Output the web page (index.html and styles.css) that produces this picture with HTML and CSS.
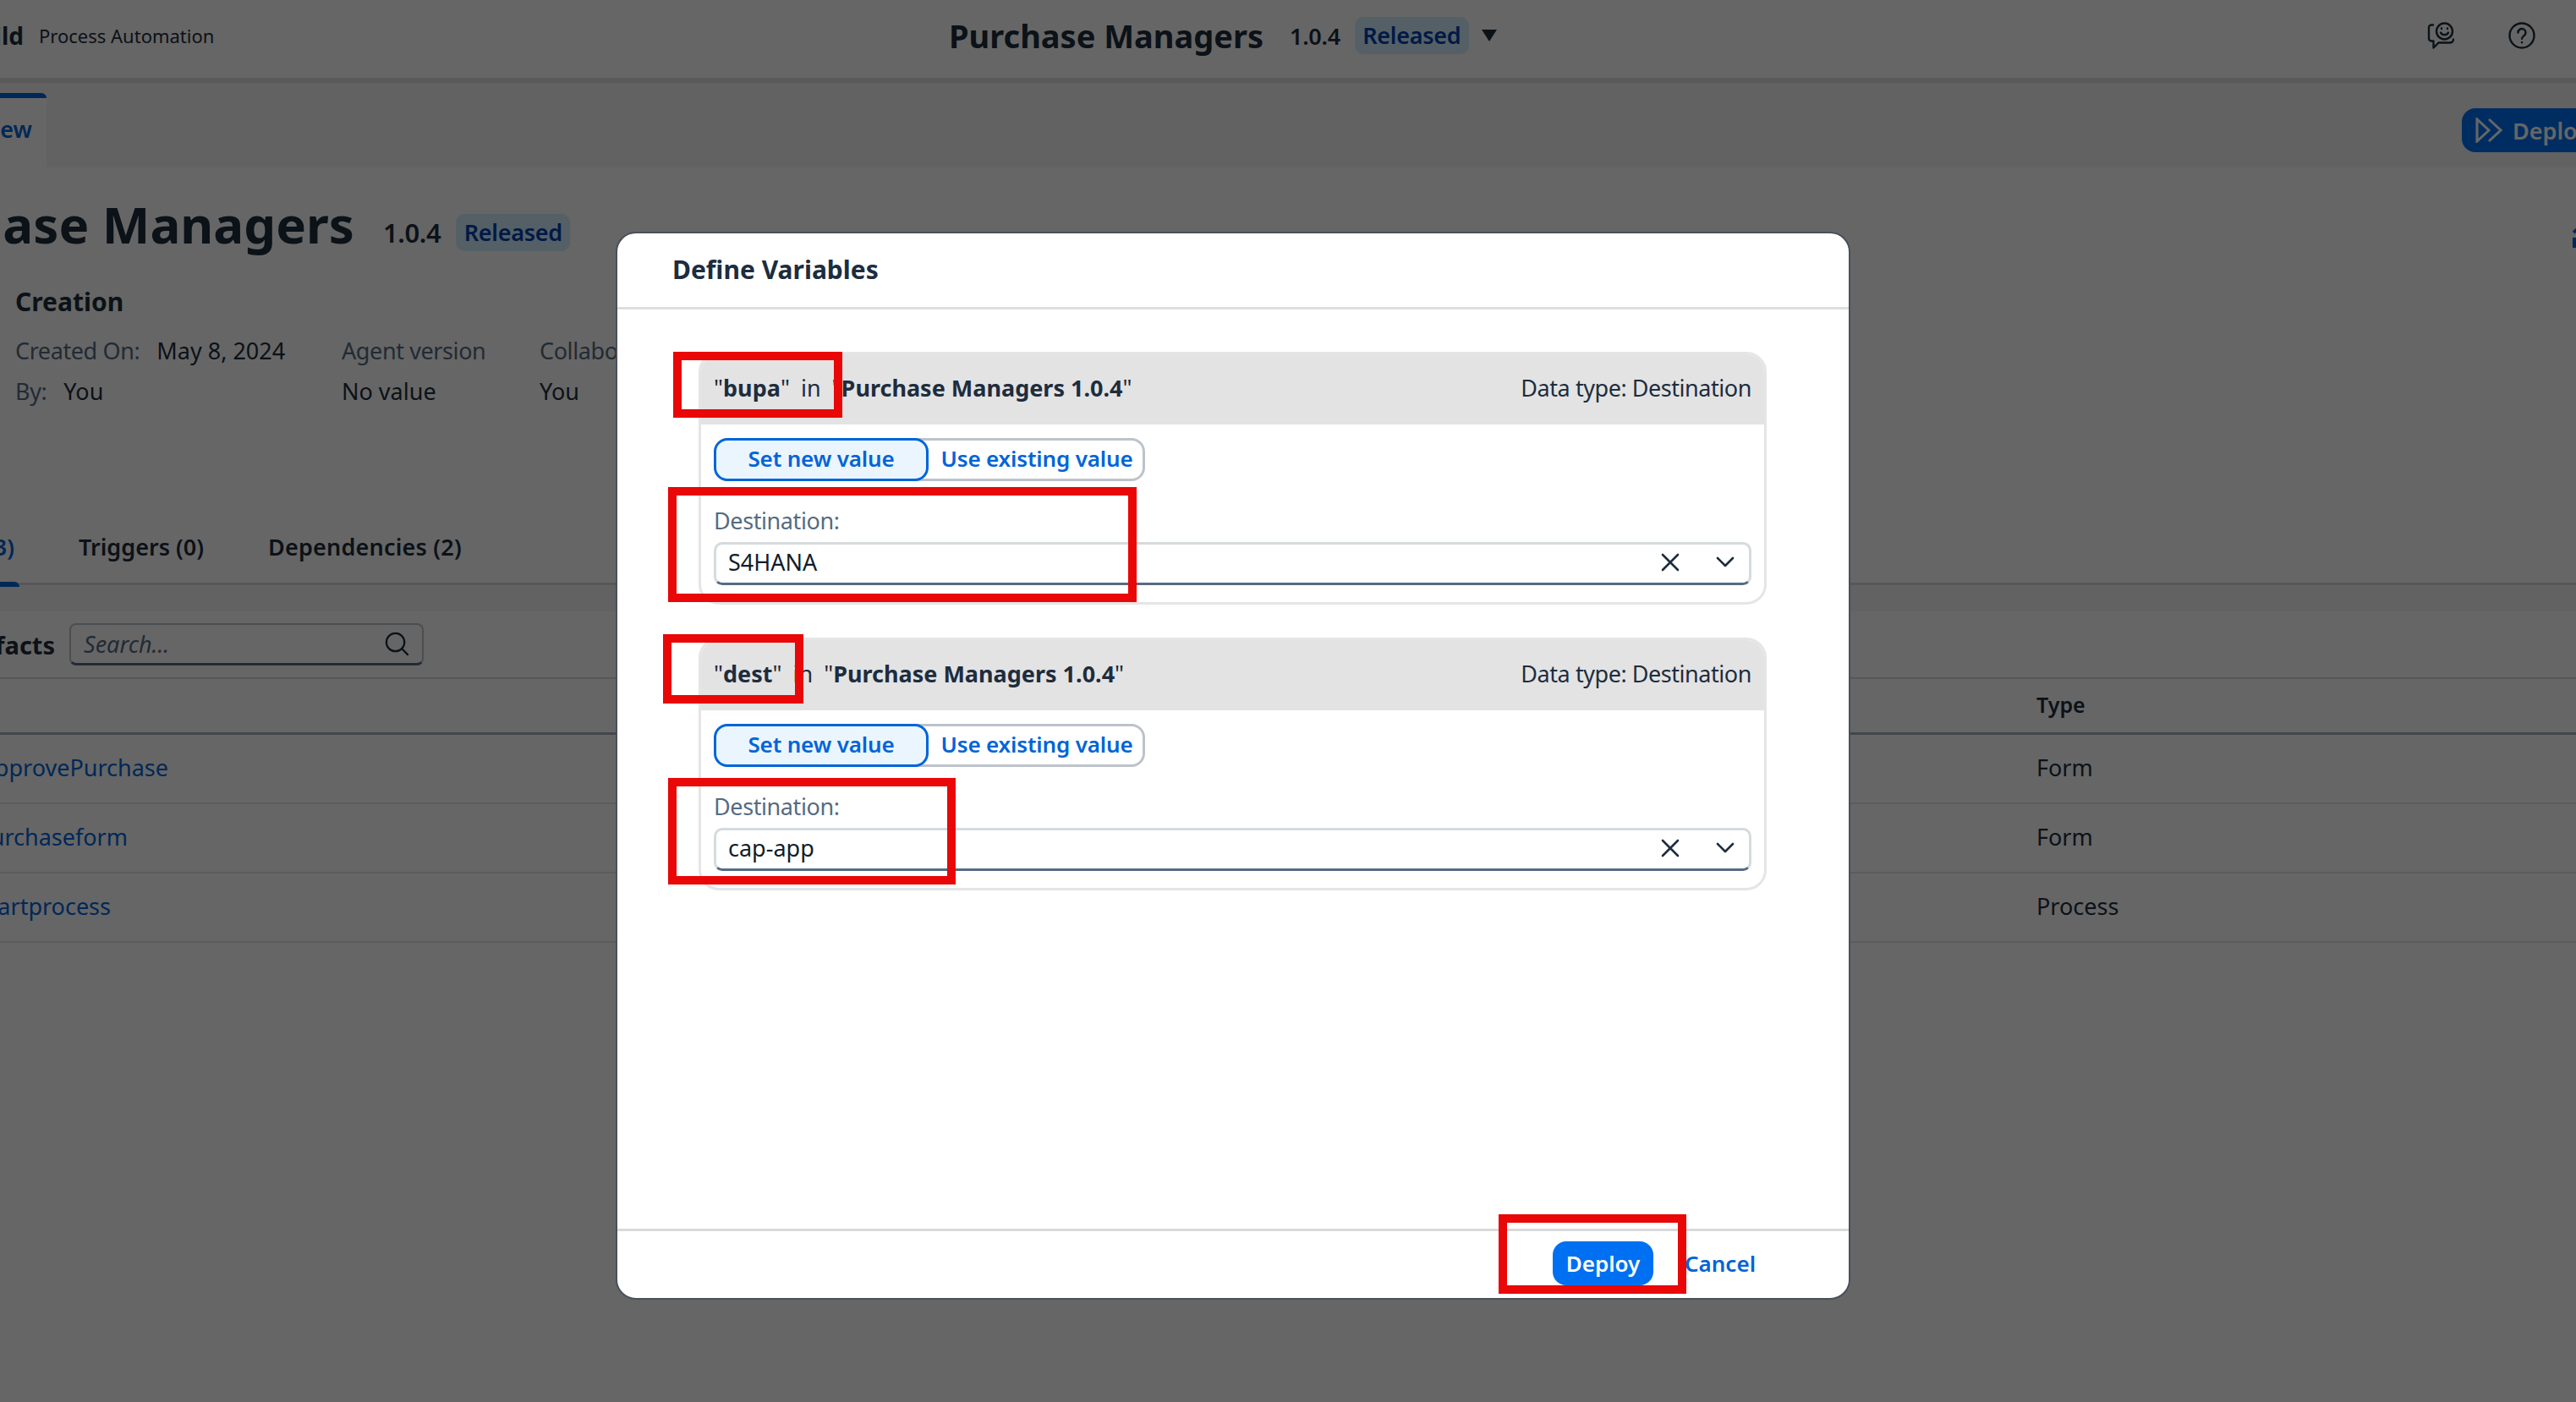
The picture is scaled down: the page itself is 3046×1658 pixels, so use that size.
FILE: index.html
```html
<!DOCTYPE html>
<html>
    <head>
        <meta charset="utf-8">
        <title>Purchase Managers</title>
        <link rel="stylesheet" href="styles.css">
    </head>
    <body>
        <header class="topbar">
            <div class="brand">
                <strong class="clip-left brand-name">SAP Build</strong>
                <span>Process Automation</span>
            </div>
            <div class="topbar-title">
                <strong class="project-name">Purchase Managers</strong>
                <span class="version">1.0.4</span>
                <span class="badge">Released</span>
                <span class="caret"></span>
            </div>
            <div class="topbar-icons">
                <svg class="icon" viewBox="0 0 32 32" fill="none" stroke="currentColor" stroke-width="2.4" stroke-linecap="round" stroke-linejoin="round">
                    <path d="M7 3.500H5a3 3 0 0 0-3 3v13a3 3 0 0 0 3 3h2.500v8l6-6h13.500a4 4 0 0 0 4-4"/>
                    <circle cx="20.500" cy="11" r="9.500"/>
                    <path d="M16 12.500c1.500 3.500 7.500 3.500 9 0"/>
                    <path d="M17 7.500v.6M24 7.500v.6"/>
                </svg>
                <svg class="icon" viewBox="0 0 32 32" fill="none" stroke="currentColor" stroke-width="2.4" stroke-linecap="round">
                    <circle cx="16" cy="16" r="14.500"/>
                    <path d="M11.500 12.500a4.500 4.500 0 1 1 7 3.700c-1.600 1.100-2.500 1.900-2.500 3.600"/>
                    <path d="M16 24v.3"/>
                </svg>
            </div>
        </header>

        <nav class="pagebar">
            <div class="tab-current clip-left">Overview</div>
            <button class="deploy-main">
                <svg class="deploy-icon" viewBox="0 0 32 30" fill="none" stroke="currentColor" stroke-width="3">
                    <path d="M2 2l14 13L2 28z"/>
                    <path d="M16 2l14 13-14 13"/>
                </svg>
                Deploy
            </button>
        </nav>

        <main>
            <div class="title-row">
                <h1 class="clip-left page-title">Purchase Managers</h1>
                <span class="page-version">1.0.4</span>
                <span class="badge">Released</span>
                <svg class="expand-icon" viewBox="0 0 12 28" fill="none" stroke="currentColor" stroke-width="4">
                    <path d="M1 8l7-6M2 14v10h10"/>
                </svg>
            </div>

            <section class="creation">
                <h2>Creation</h2>
                <div class="meta">
                    <div class="meta-line"><span class="meta-key">Created On:</span><span>May 8, 2024</span></div>
                    <div class="meta-key">Agent version</div>
                    <div class="meta-key">Collaborators</div>
                    <div class="meta-line"><span class="meta-key">By:</span><span>You</span></div>
                    <div>No value</div>
                    <div>You</div>
                </div>
            </section>

            <div class="tabs">
                <div class="tab-active clip-left">Artifacts (3)</div>
                <div>Triggers (0)</div>
                <div class="tab-deps">Dependencies (2)</div>
            </div>
            <div class="band"></div>

            <div class="toolbar">
                <strong class="clip-left toolbar-title">Artifacts</strong>
                <div class="search">
                    <span>Search...</span>
                    <svg class="search-icon" viewBox="0 0 30 30" fill="none" stroke="currentColor" stroke-width="2.4" stroke-linecap="round">
                        <circle cx="13" cy="13" r="11"/>
                        <path d="M21 21l7 7"/>
                    </svg>
                </div>
            </div>

            <div class="table-row table-head">
                <div></div>
                <div>Type</div>
            </div>
            <div class="table-row">
                <a class="clip-left row-approve">ApprovePurchase</a>
                <div>Form</div>
            </div>
            <div class="table-row">
                <a class="clip-left row-form">Purchaseform</a>
                <div>Form</div>
            </div>
            <div class="table-row">
                <a class="clip-left row-start">Startprocess</a>
                <div>Process</div>
            </div>
        </main>

        <div class="overlay"></div>

        <div class="dialog">
            <div class="dialog-head">Define Variables</div>
            <div class="dialog-body">
                <section class="card">
                    <div class="card-head">
                        <div class="card-title">
                            <span>"<b>bupa</b>"</span>
                            <span>in</span>
                            <span>"<b>Purchase Managers 1.0.4</b>"</span>
                        </div>
                        <span class="card-type">Data type: Destination</span>
                    </div>
                    <div class="card-body">
                        <div class="toggle">
                            <button class="toggle-on">Set new value</button>
                            <button class="toggle-off">Use existing value</button>
                        </div>
                        <label class="field-label">Destination:</label>
                        <div class="combo">
                            <span class="combo-value">S4HANA</span>
                            <svg class="combo-clear" viewBox="0 0 22 22" fill="none" stroke="currentColor" stroke-width="2.600" stroke-linecap="round">
                                <path d="M2 2l18 18M20 2L2 20"/>
                            </svg>
                            <svg class="combo-arrow" viewBox="0 0 22 14" fill="none" stroke="currentColor" stroke-width="2.600" stroke-linecap="round" stroke-linejoin="round">
                                <path d="M2 2l9 9 9-9"/>
                            </svg>
                        </div>
                    </div>
                </section>

                <section class="card">
                    <div class="card-head">
                        <div class="card-title">
                            <span>"<b>dest</b>"</span>
                            <span>in</span>
                            <span>"<b>Purchase Managers 1.0.4</b>"</span>
                        </div>
                        <span class="card-type">Data type: Destination</span>
                    </div>
                    <div class="card-body">
                        <div class="toggle">
                            <button class="toggle-on">Set new value</button>
                            <button class="toggle-off">Use existing value</button>
                        </div>
                        <label class="field-label">Destination:</label>
                        <div class="combo">
                            <span class="combo-value">cap-app</span>
                            <svg class="combo-clear" viewBox="0 0 22 22" fill="none" stroke="currentColor" stroke-width="2.600" stroke-linecap="round">
                                <path d="M2 2l18 18M20 2L2 20"/>
                            </svg>
                            <svg class="combo-arrow" viewBox="0 0 22 14" fill="none" stroke="currentColor" stroke-width="2.600" stroke-linecap="round" stroke-linejoin="round">
                                <path d="M2 2l9 9 9-9"/>
                            </svg>
                        </div>
                    </div>
                </section>
            </div>
            <div class="dialog-foot">
                <button class="btn-deploy">Deploy</button>
                <a class="btn-cancel">Cancel</a>
            </div>

            <!-- red highlight boxes from the screenshot author -->
            <div class="mark mark-bupa"></div>
            <div class="mark mark-dest1"></div>
            <div class="mark mark-dest"></div>
            <div class="mark mark-dest2"></div>
            <div class="mark mark-deploy"></div>
        </div>
    </body>
</html>
```

FILE: styles.css
```css
* {
    box-sizing: border-box;
}

html,
body {
    margin: 0;
    height: 1658px;
    overflow: hidden;
}

body {
    position: relative;
    width: 3046px;
    background-color: #fff;
    color: #1d2d3e;
    font-family: "Noto Sans", sans-serif;
    font-size: 27px;
}

button {
    font-family: inherit;
    cursor: pointer;
}

/* text cut off by the left window edge: the box ends where the text ends */
.clip-left {
    display: flex;
    flex-shrink: 0;
    justify-content: flex-end;
    white-space: nowrap;
}

/* top bar */
.topbar {
    display: flex;
    align-items: center;
    height: 92px;
    padding-bottom: 8px;
    background-color: #fff;
    box-shadow: 0 6px 0 #e2e2e4;
    position: relative;
}

.brand {
    display: flex;
    align-items: center;
    gap: 18px;
    width: 1122px;
    font-size: 22px;
}

.brand-name {
    width: 28px;
    font-size: 28px;
}

.topbar-title {
    display: flex;
    align-items: center;
}

.project-name {
    font-size: 38px;
    font-weight: 700;
}

.version {
    margin-left: 31px;
    font-size: 27px;
    font-weight: 600;
    letter-spacing: -0.3px;
}

.badge {
    display: flex;
    align-items: center;
    justify-content: center;
    height: 44px;
    width: 135px;
    padding-bottom: 2px;
    border-radius: 10px;
    background-color: #d1efff;
    color: #0040b0;
    font-size: 27px;
    font-weight: 600;
    letter-spacing: -0.3px;
}

.topbar-title .badge {
    margin-left: 17px;
}

.caret {
    margin-left: 15px;
    border-left: 9px solid transparent;
    border-right: 9px solid transparent;
    border-top: 14px solid #1d2d3e;
}

.topbar-icons {
    display: flex;
    gap: 64px;
    margin-left: auto;
    padding-right: 48px;
}

.icon {
    width: 32px;
    height: 32px;
}

/* page bar */
.pagebar {
    display: flex;
    align-items: flex-end;
    justify-content: space-between;
    height: 106px;
    background-color: #f5f6f7;
}

.tab-current {
    width: 55px;
    height: 88px;
    align-items: center;
    padding-right: 17px;
    padding-bottom: 10px;
    background-color: #fff;
    border-top: 6px solid #0064d9;
    border-top-right-radius: 6px;
    color: #0064d9;
    font-weight: 600;
}

.deploy-main {
    display: flex;
    align-items: center;
    gap: 12px;
    width: 180px;
    height: 52px;
    margin-bottom: 18px;
    margin-right: -45px;
    padding: 0 16px;
    border: none;
    border-radius: 16px;
    background-color: #0070f2;
    color: #fff;
    font-size: 27px;
    font-weight: 600;
}

.deploy-icon {
    flex-shrink: 0;
    width: 32px;
    height: 30px;
}

/* object header */
.title-row {
    display: flex;
    align-items: center;
    margin-top: 46px;
    height: 52px;
}

.page-title {
    width: 419px;
    margin: -10px 0 0;
    font-size: 60px;
    font-weight: 700;
}

.page-version {
    margin: 10px 0 0 34px;
    font-size: 31px;
    font-weight: 600;
    letter-spacing: -0.4px;
}

.title-row .badge {
    margin: 10px 0 0 18px;
}

.expand-icon {
    flex-shrink: 0;
    width: 12px;
    height: 28px;
    margin: 22px -8px 0 auto;
    color: #0064d9;
}

.creation {
    padding-left: 18px;
}

.creation h2 {
    margin: 39px 0 0;
    font-size: 30px;
    line-height: 44px;
    font-weight: 700;
}

.meta {
    display: grid;
    grid-template-columns: 386px 234px 1fr;
    grid-auto-rows: 48px;
    align-items: center;
    margin-top: 11px;
}

.meta-line {
    display: flex;
    gap: 20px;
}

.meta-key {
    color: #556b82;
    letter-spacing: -0.4px;
}

/* tabs */
.tabs {
    display: flex;
    align-items: center;
    gap: 76px;
    margin-top: 118px;
    height: 88px;
    border-bottom: 3px solid #d9d9d9;
    font-weight: 600;
}

.tab-deps {
    letter-spacing: 0.2px;
}

.tab-active {
    width: 17px;
    height: 88px;
    align-items: center;
    color: #0064d9;
    position: relative;
}

.tab-active::after {
    content: "";
    position: absolute;
    left: 0;
    right: -6px;
    bottom: -3px;
    height: 6px;
    border-radius: 0 6px 0 0;
    background-color: #0064d9;
}

.band {
    height: 31px;
    background-color: #f5f6f7;
}

.toolbar {
    display: flex;
    align-items: center;
    gap: 17px;
    height: 80px;
    border-bottom: 2px solid #d9d9d9;
}

.toolbar-title {
    width: 65px;
    font-size: 29px;
    font-weight: 700;
}

.search {
    display: flex;
    align-items: center;
    justify-content: space-between;
    width: 419px;
    height: 50px;
    padding: 0 15px;
    border: 2px solid #bcc3ca;
    border-bottom: 3px solid #556b82;
    border-radius: 8px;
    color: #556b82;
    font-style: italic;
}

.search-icon {
    width: 29px;
    height: 29px;
    color: #1d2d3e;
}

.table-row {
    display: grid;
    grid-template-columns: 2408px 1fr;
    align-items: center;
    height: 82px;
    padding-bottom: 3px;
    border-bottom: 2px solid #e5e5e5;
}

.table-head {
    height: 66px;
    border-bottom: 3px solid #a8b2bd;
    font-weight: 600;
    font-size: 25px;
}

.table-row a {
    color: #0064d9;
}

.row-approve {
    width: 199px;
}

.row-form {
    width: 151px;
}

.row-start {
    width: 131px;
}

/* dim layer and dialog */
.overlay {
    position: absolute;
    inset: 0;
    background-color: rgba(0, 0, 0, 0.6);
}

.dialog {
    position: absolute;
    left: 728px;
    top: 274px;
    width: 1460px;
    height: 1263px;
    display: flex;
    flex-direction: column;
    background-color: #fff;
    border: 2px solid #48505c;
    border-radius: 24px;
}

.dialog-head {
    display: flex;
    align-items: center;
    height: 90px;
    padding-left: 65px;
    padding-bottom: 2px;
    border-bottom: 3px solid #dedede;
    font-size: 30px;
    font-weight: 700;
}

.dialog-body {
    flex: 1;
    display: flex;
    flex-direction: column;
    gap: 39px;
    padding: 50px 97px 0 96px;
}

.card {
    height: 299px;
    border: 3px solid #e5e5e5;
    border-radius: 24px;
    overflow: hidden;
}

.card-head {
    display: flex;
    align-items: center;
    justify-content: space-between;
    height: 83px;
    padding: 0 15px 4px;
    background-color: #e3e3e3;
}

.card-title {
    display: flex;
    gap: 13px;
}

.card-title b {
    font-weight: 700;
}

.card-type {
    letter-spacing: -0.45px;
}

.card-body {
    padding: 16px 15px 0;
}

.toggle {
    display: flex;
    height: 51px;
}

.toggle button {
    height: 51px;
    padding: 0 0 3px;
    font-size: 26px;
    font-weight: 600;
    letter-spacing: -0.15px;
    color: #0064d9;
}

.toggle-on {
    position: relative;
    width: 254px;
    background-color: #ebf5fe;
    border: 3px solid #0064d9;
    border-radius: 16px;
}

.toggle .toggle-off {
    width: 272px;
    margin-left: -16px;
    padding-left: 16px;
    background-color: #fff;
    border: 3px solid #bcc3ca;
    border-radius: 0 16px 16px 0;
}

.field-label {
    display: block;
    margin-top: 29px;
    line-height: 36px;
    color: #556b82;
    letter-spacing: -0.4px;
}

.combo {
    display: flex;
    align-items: center;
    height: 51px;
    margin-top: 7px;
    padding: 0 15px 4px 14px;
    border: 3px solid #d5dadd;
    border-bottom-color: #556b82;
    border-radius: 10px;
}

.combo-value {
    flex: 1;
    color: #131e29;
}

.combo-clear {
    width: 22px;
    height: 22px;
    margin-right: 43px;
}

.combo-arrow {
    width: 22px;
    height: 14px;
    margin-right: 2px;
}

.dialog-foot {
    display: flex;
    align-items: center;
    justify-content: flex-end;
    gap: 37px;
    height: 82px;
    padding-right: 110px;
    padding-bottom: 3px;
    border-top: 3px solid #d9d9d9;
}

.btn-deploy {
    width: 119px;
    height: 52px;
    padding: 0;
    border: none;
    border-radius: 16px;
    background-color: #0070f2;
    color: #fff;
    font-size: 26px;
    font-weight: 600;
}

.btn-cancel {
    color: #0064d9;
    font-size: 26px;
    font-weight: 600;
}

.mark {
    position: absolute;
    border: 10px solid #e90707;
}

.mark-bupa {
    left: 66px;
    top: 140px;
    width: 200px;
    height: 78px;
}

.mark-dest1 {
    left: 60px;
    top: 300px;
    width: 554px;
    height: 136px;
}

.mark-dest {
    left: 54px;
    top: 474px;
    width: 166px;
    height: 82px;
}

.mark-dest2 {
    left: 60px;
    top: 644px;
    width: 340px;
    height: 126px;
}

.mark-deploy {
    left: 1042px;
    top: 1160px;
    width: 222px;
    height: 94px;
}
```
